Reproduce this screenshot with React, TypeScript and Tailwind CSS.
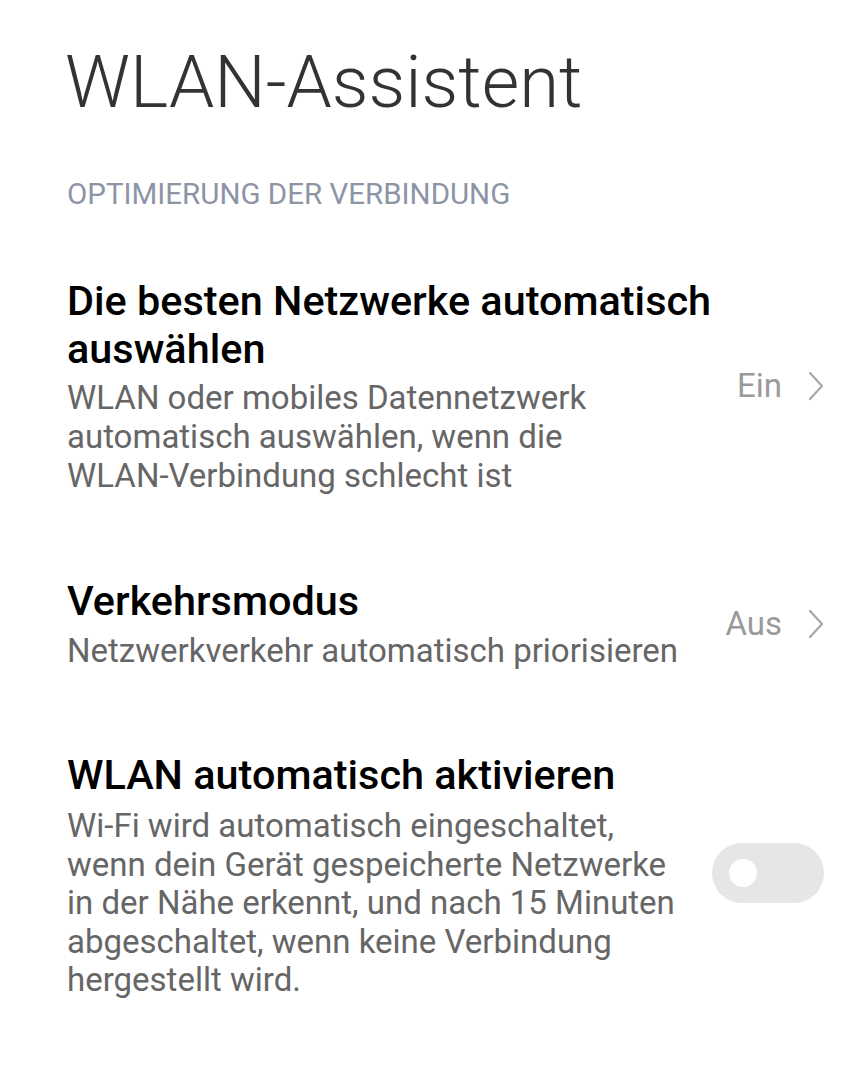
import React from "react";

function Chevron() {
  return (
    <svg width="16" height="30" viewBox="0 0 16 30" fill="none" className="shrink-0">
      <polyline points="2,2 14,15 2,28" stroke="#a8a8a8" strokeWidth="2.2" strokeLinecap="round" strokeLinejoin="round" />
    </svg>
  );
}

function ValueLink({ value }: { value: string }) {
  return (
    <div className="flex items-center gap-[26px] shrink-0">
      <span className="text-[33px] leading-[40px] text-[#9a9a9a]">{value}</span>
      <Chevron />
    </div>
  );
}

export default function App() {
  return (
    <div
      className="w-[865px] h-[1080px] bg-white pl-[67px] pr-[41px] overflow-hidden"
      style={{ fontFamily: "Roboto, 'Liberation Sans', sans-serif" }}
    >
      <h1 className="pt-[46px] -ml-[2px] text-[72.5px] leading-[73px] font-light text-[#333333] whitespace-nowrap">
        WLAN-Assistent
      </h1>

      <div className="mt-[57px] text-[29.5px] leading-[36px] text-[#8c94a6] whitespace-nowrap">
        OPTIMIERUNG DER VERBINDUNG
      </div>

      <div className="mt-[65px] flex items-center justify-between">
        <div>
          <div className="text-[41.4px] leading-[48px] font-medium text-black whitespace-nowrap">
            Die besten Netzwerke automatisch
            <br />
            auswählen
          </div>
          <div className="mt-[5px] text-[33px] leading-[39px] text-[#666666] whitespace-nowrap">
            WLAN oder mobiles Datennetzwerk
            <br />
            automatisch auswählen, wenn die
            <br />
            WLAN-Verbindung schlecht ist
          </div>
        </div>
        <ValueLink value="Ein" />
      </div>

      <div className="mt-[82px] flex items-center justify-between">
        <div>
          <div className="text-[41.4px] leading-[48px] font-medium text-black whitespace-nowrap">
            Verkehrsmodus
          </div>
          <div className="mt-[6px] text-[33px] leading-[39px] text-[#666666] whitespace-nowrap">
            Netzwerkverkehr automatisch priorisieren
          </div>
        </div>
        <ValueLink value="Aus" />
      </div>

      <div className="mt-[81px] flex items-center justify-between">
        <div>
          <div className="text-[41.4px] leading-[48px] font-medium text-black whitespace-nowrap">
            WLAN automatisch aktivieren
          </div>
          <div className="mt-[8px] text-[33px] leading-[38.5px] text-[#666666] whitespace-nowrap">
            Wi-Fi wird automatisch eingeschaltet,
            <br />
            wenn dein Gerät gespeicherte Netzwerke
            <br />
            in der Nähe erkennt, und nach 15 Minuten
            <br />
            abgeschaltet, wenn keine Verbindung
            <br />
            hergestellt wird.
          </div>
        </div>
        <div className="w-[112px] h-[60px] -mt-[4px] rounded-full bg-[#e6e6e6] flex items-center pl-[17px] shrink-0">
          <div className="w-[28px] h-[28px] rounded-full bg-white" />
        </div>
      </div>
    </div>
  );
}
